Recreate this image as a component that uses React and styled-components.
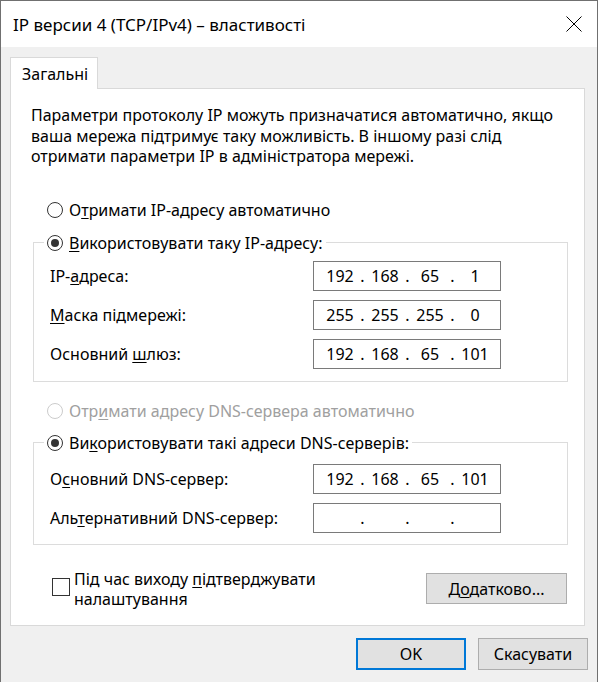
import React from "react";
import styled, { createGlobalStyle } from "styled-components";

const GlobalStyle = createGlobalStyle`
  html, body {
    margin: 0;
    padding: 0;
    background: #ffffff;
  }
  body {
    font-family: "Noto Sans", "Open Sans", sans-serif;
    font-size: 16px;
    color: #000;
  }
`;

const Window = styled.div`
  box-sizing: border-box;
  width: 598px;
  height: 682px;
  border: 1px solid #707070;
  border-bottom: none;
  background: #f0f0f0;
  display: flex;
  flex-direction: column;
`;

const TitleBar = styled.div`
  height: 46px;
  flex-shrink: 0;
  background: #fff;
  display: flex;
  align-items: center;
  justify-content: space-between;
  padding: 0 15px 0 12px;
  font-size: 17px;
`;

const CloseIcon = () => (
  <svg width="16" height="16" viewBox="0 0 16 16">
    <path d="M0.5 0.5 L15.5 15.5 M15.5 0.5 L0.5 15.5" stroke="#000" strokeWidth="1" />
  </svg>
);

const Body = styled.div`
  padding: 10px 9px 0 9px;
  display: flex;
  flex-direction: column;
`;

const Tab = styled.div`
  box-sizing: border-box;
  width: 88px;
  height: 32px;
  margin-bottom: -1px;
  position: relative;
  z-index: 1;
  background: #fff;
  border: 1px solid #d9d9d9;
  border-bottom: none;
  padding-left: 11px;
  display: flex;
  align-items: center;
`;

const Panel = styled.div`
  box-sizing: border-box;
  height: 538px;
  margin-right: 3px;
  background: #fff;
  border: 1px solid #d9d9d9;
  padding: 16px 0 0 20px;
  display: flex;
  flex-direction: column;
`;

const Intro = styled.p`
  margin: 0;
  line-height: 20.5px;
`;

const Key = styled.u`
  text-underline-offset: 2px;
  text-decoration-thickness: 1px;
`;

const Choice = styled.label`
  display: flex;
  align-items: center;
  gap: 6px;
  height: 20px;
  margin: ${(p) => p.$margin || "0"};
  color: ${(p) => (p.$disabled ? "#a0a0a0" : "#000")};
  background: #fff;
`;

const RadioDot = styled.span`
  box-sizing: border-box;
  width: 16px;
  height: 16px;
  border-radius: 50%;
  border: 1px solid ${(p) => (p.$disabled ? "#cccccc" : "#333")};
  background: #fff;
  display: flex;
  align-items: center;
  justify-content: center;

  &::after {
    content: "";
    width: 8px;
    height: 8px;
    border-radius: 50%;
    background: #333;
    display: ${(p) => (p.$checked ? "block" : "none")};
  }
`;

const Group = styled.fieldset`
  box-sizing: border-box;
  width: 535px;
  margin: ${(p) => p.$margin};
  margin-left: 2px;
  padding: ${(p) => p.$pad};
  border: 1px solid #dcdcdc;
  display: flex;
  flex-direction: column;
  gap: 9px;
`;

const GroupTitle = styled.legend`
  padding: 0 3px;
  margin-left: -6px;
`;

const Field = styled.div`
  display: flex;
  align-items: center;
  justify-content: space-between;
`;

const AddressBox = styled.div`
  box-sizing: border-box;
  width: 188px;
  height: 30px;
  border: 1px solid #7a7a7a;
  padding-left: 8px;
  display: flex;
  align-items: center;
`;

const Octet = styled.span`
  width: 36px;
  text-align: center;
`;

const Dot = styled.span`
  width: 9px;
  text-align: center;
`;

const Address = ({ value }) => {
  const parts = value ? value.split(".") : ["", "", "", ""];
  return (
    <AddressBox>
      {parts.map((part, i) => (
        <React.Fragment key={i}>
          {i > 0 && <Dot>.</Dot>}
          <Octet>{part}</Octet>
        </React.Fragment>
      ))}
    </AddressBox>
  );
};

const BottomRow = styled.div`
  display: flex;
  align-items: center;
  justify-content: space-between;
  margin: 24px 17px 0 21px;
`;

const Check = styled.label`
  display: flex;
  align-items: flex-start;
  gap: 4px;
  line-height: 20px;
`;

const CheckBox = styled.span`
  box-sizing: border-box;
  width: 18px;
  height: 18px;
  margin-top: 9px;
  border: 1px solid #333;
  background: #fff;
  flex-shrink: 0;
`;

const Button = styled.button`
  box-sizing: border-box;
  width: ${(p) => p.$width}px;
  height: ${(p) => p.$height}px;
  background: #e1e1e1;
  border: ${(p) => (p.$primary ? "2px solid #0078d7" : "1px solid #adadad")};
  font-family: inherit;
  font-size: 16px;
  color: #000;
  padding: 0;
`;

const Footer = styled.div`
  display: flex;
  justify-content: flex-end;
  gap: 12px;
  margin-top: 12px;
`;

export default function App() {
  return (
    <>
      <GlobalStyle />
      <Window>
        <TitleBar>
          <span>IP версии 4 (TCP/IPv4) – властивості</span>
          <CloseIcon />
        </TitleBar>
        <Body>
          <Tab>Загальні</Tab>
          <Panel>
            <Intro>
              Параметри протоколу IP можуть призначатися автоматично, якщо
              <br />
              ваша мережа підтримує таку можливість. В іншому разі слід
              <br />
              отримати параметри IP в адміністратора мережі.
            </Intro>

            <Choice $margin="33px 0 0 16px">
              <RadioDot />
              <span>
                О<Key>т</Key>римати IP-адресу автоматично
              </span>
            </Choice>

            <Group $margin="13px 0 0" $pad="8px 66px 12px 16px">
              <GroupTitle>
                <Choice>
                  <RadioDot $checked />
                  <span>
                    <Key>В</Key>икористовувати таку IP-адресу:
                  </span>
                </Choice>
              </GroupTitle>
              <Field>
                <span>
                  IP-<Key>а</Key>дреса:
                </span>
                <Address value="192.168.65.1" />
              </Field>
              <Field>
                <span>
                  <Key>М</Key>аска підмережі:
                </span>
                <Address value="255.255.255.0" />
              </Field>
              <Field>
                <span>
                  Основний <Key>ш</Key>люз:
                </span>
                <Address value="192.168.65.101" />
              </Field>
            </Group>

            <Choice $margin="19px 0 0 16px" $disabled>
              <RadioDot $disabled />
              <span>
                Отр<Key>и</Key>мати адресу DNS-сервера автоматично
              </span>
            </Choice>

            <Group $margin="12px 0 0" $pad="11px 66px 11px 16px">
              <GroupTitle>
                <Choice>
                  <RadioDot $checked />
                  <span>
                    Ви<Key>к</Key>ористовувати такі адреси DNS-серверів:
                  </span>
                </Choice>
              </GroupTitle>
              <Field>
                <span>
                  О<Key>с</Key>новний DNS-сервер:
                </span>
                <Address value="192.168.65.101" />
              </Field>
              <Field>
                <span>
                  Аль<Key>т</Key>ернативний DNS-сервер:
                </span>
                <Address />
              </Field>
            </Group>

            <BottomRow>
              <Check>
                <CheckBox />
                <span>
                  Під час виходу <Key>п</Key>ідтверджувати
                  <br />
                  налаштування
                </span>
              </Check>
              <Button $width={141} $height={31}>
                Д<Key>о</Key>датково...
              </Button>
            </BottomRow>
          </Panel>
          <Footer>
            <Button $primary $width={110} $height={32}>
              OK
            </Button>
            <Button $width={110} $height={32}>
              Скасувати
            </Button>
          </Footer>
        </Body>
      </Window>
    </>
  );
}
